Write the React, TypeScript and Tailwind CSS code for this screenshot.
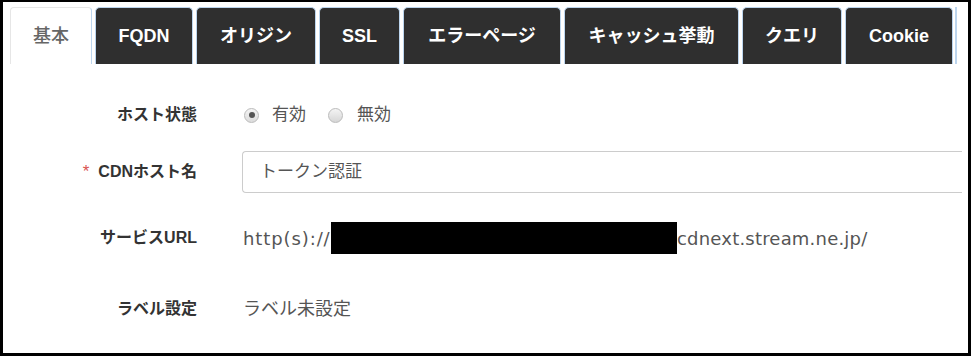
import React from "react";

const tabs = [
  { label: "FQDN", w: "w-[98px]" },
  { label: "オリジン", w: "w-[120px]" },
  { label: "SSL", w: "w-[81px]" },
  { label: "エラーページ", w: "w-[158px]" },
  { label: "キャッシュ挙動", w: "w-[175px]" },
  { label: "クエリ", w: "w-[100px]" },
  { label: "Cookie", w: "w-[108px]" },
];

const sans = "font-['Liberation_Sans','Noto_Sans_CJK_JP',sans-serif]";

export default function App() {
  return (
    <div className="w-[971px] h-[356px] bg-white">
      <div className="w-[971px] h-[356px] border-[3px] border-black border-t-[2px] overflow-hidden bg-white flex flex-col">
        {/* Tabs */}
        <div className={`flex items-end gap-[3px] pl-[7px] pt-[5px] h-[62px] ${sans}`}>
          <div className="w-[82px] h-[57px] rounded-t-[4px] border border-b-0 border-[#e6e6e6] border-r-[#bcd5ee] bg-white flex items-center justify-center text-[18px] text-[#666] font-medium">
            基本
          </div>
          {tabs.map((t) => (
            <div
              key={t.label}
              className={`${t.w} shrink-0 h-[57px] rounded-t-[5px] border border-b-0 border-[#bcd5ee] bg-[#2f2f2f] flex items-center justify-center text-[18px] text-white font-bold`}
            >
              {t.label}
            </div>
          ))}
          <div className="ml-[-1px] w-[2px] shrink-0 h-[57px] border-l-[2px] border-[#bcd5ee]" />
        </div>

        {/* Form */}
        <div className={`flex flex-col ${sans}`}>
          {/* Row 1 */}
          <div className="flex items-center h-[38px] mt-[32px]">
            <div className="w-[194px] text-right text-[16px] font-bold text-[#333]">ホスト状態</div>
            <div className="ml-[47px] flex items-center text-[17px] text-[#555]">
              <span className="w-[15px] h-[15px] rounded-full border border-[#bbb] bg-gradient-to-b from-[#f4f4f4] to-[#dcdcdc] flex items-center justify-center">
                <span className="w-[6px] h-[6px] rounded-full bg-[#555]" />
              </span>
              <span className="ml-[13px]">有効</span>
              <span className="ml-[22px] w-[15px] h-[15px] rounded-full border border-[#bbb] bg-gradient-to-b from-[#f4f4f4] to-[#d6d6d6]" />
              <span className="ml-[14px]">無効</span>
            </div>
          </div>

          {/* Row 2 */}
          <div className="flex items-center h-[42px] mt-[17px]">
            <div className="w-[194px] text-right text-[16px] font-bold text-[#333]">
              <span className="text-[#d9534f] text-[17px] font-normal mr-[9px]">*</span>CDNホスト名
            </div>
            <div className="ml-[45px] w-[720px] h-[42px] border border-r-0 border-[#ccc] rounded-l-[4px] flex items-center pl-[17px] text-[17px] text-[#555]">
              トークン認証
            </div>
          </div>

          {/* Row 3 */}
          <div className="flex items-center h-[32px] mt-[29px]">
            <div className="w-[194px] text-right text-[16px] font-bold text-[#333]">サービスURL</div>
            <div className="ml-[46px] flex items-center text-[18px] text-[#555] font-['DejaVu_Sans',sans-serif]">
              <span className="w-[88px] tracking-[0.9px]">http(s)://</span>
              <span className="w-[346px] h-[32px] bg-black" />
              <span className="tracking-[0.2px]">cdnext.stream.ne.jp/</span>
            </div>
          </div>

          {/* Row 4 */}
          <div className="flex items-center h-[30px] mt-[40px]">
            <div className="w-[194px] text-right text-[16px] font-bold text-[#333]">ラベル設定</div>
            <div className="ml-[46px] text-[18px] text-[#555]">ラベル未設定</div>
          </div>
        </div>
      </div>
    </div>
  );
}
